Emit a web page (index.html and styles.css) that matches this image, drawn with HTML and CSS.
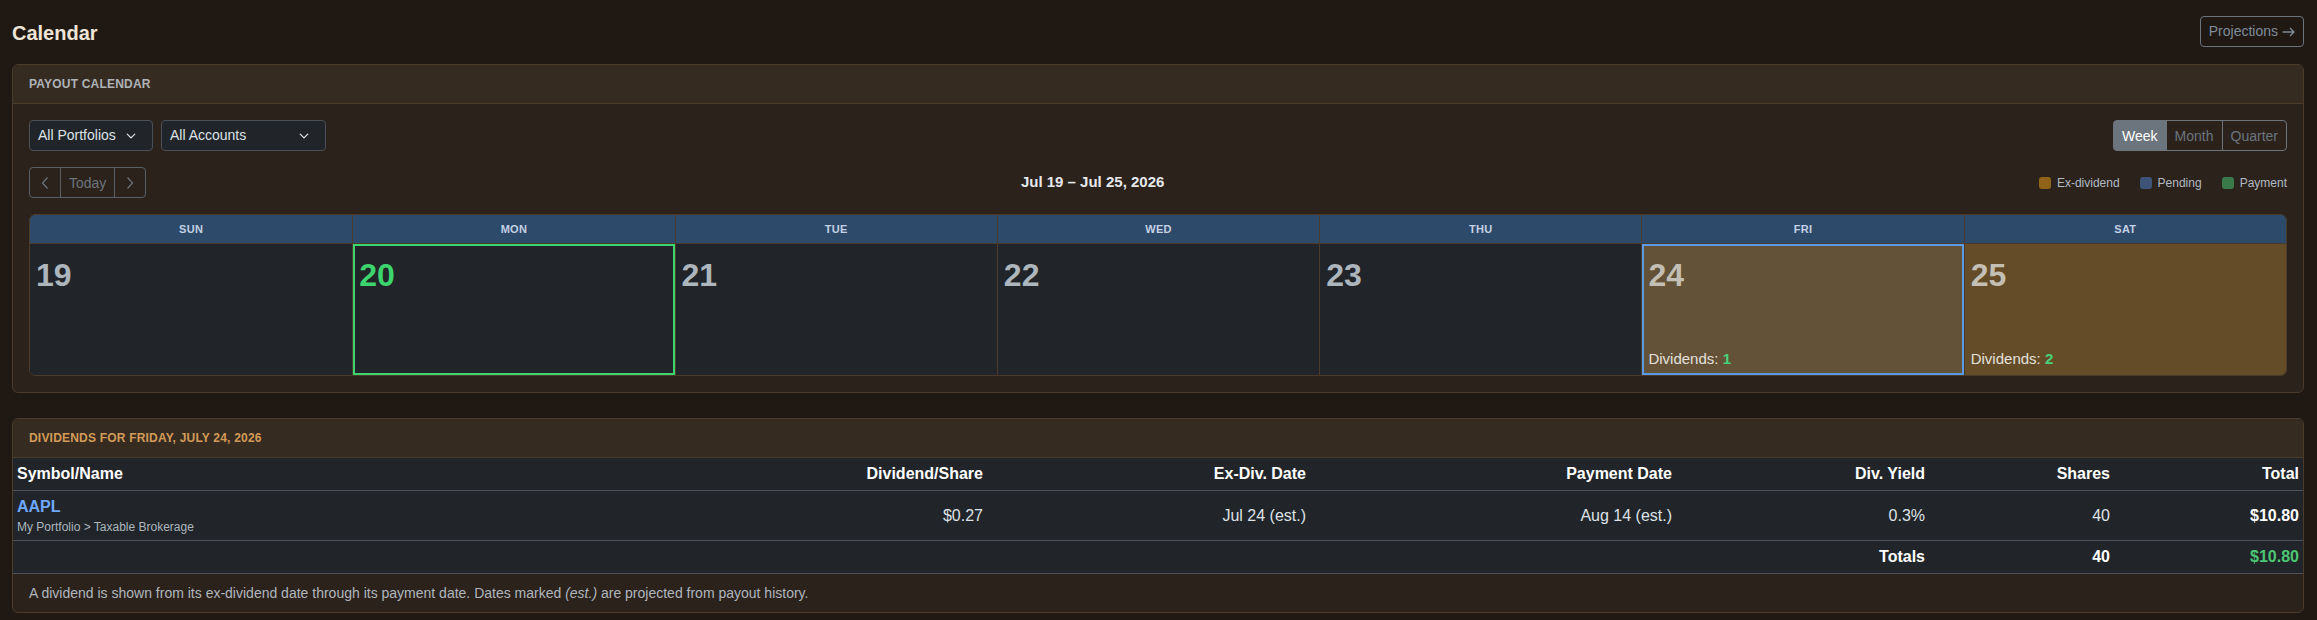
FILE: index.html
```html
<!DOCTYPE html>
<html lang="en">
<head>
<meta charset="utf-8">
<title>Calendar</title>
<link rel="stylesheet" href="styles.css">
</head>
<body>
<div class="page">
  <header class="page-head">
    <h1 class="page-title">Calendar</h1>
    <a class="btn-outline" href="#">Projections
      <svg class="arrow" viewBox="0 0 13 10" width="13" height="10"><path d="M0.5 5h11.5M8 1l4 4-4 4"/></svg>
    </a>
  </header>

  <section class="card">
    <div class="card-header">Payout Calendar</div>
    <div class="card-body">
      <div class="toolbar">
        <div class="filters">
          <div class="select select-portfolio">
            <span>All Portfolios</span>
            <svg class="caret" viewBox="0 0 16 16" width="14" height="10"><path d="M2 5l6 6 6-6"/></svg>
          </div>
          <div class="select select-account">
            <span>All Accounts</span>
            <svg class="caret" viewBox="0 0 16 16" width="14" height="10"><path d="M2 5l6 6 6-6"/></svg>
          </div>
        </div>
        <div class="seg">
          <button class="seg-btn active">Week</button>
          <button class="seg-btn">Month</button>
          <button class="seg-btn">Quarter</button>
        </div>
      </div>

      <div class="toolbar">
        <div class="seg nav">
          <button class="seg-btn icon" aria-label="Previous week">
            <svg viewBox="0 0 8 14" width="8" height="14"><path d="M6.5 1.5L1.5 7l5 5.5"/></svg>
          </button>
          <button class="seg-btn">Today</button>
          <button class="seg-btn icon" aria-label="Next week">
            <svg viewBox="0 0 8 14" width="8" height="14"><path d="M1.5 1.5l5 5.5-5 5.5"/></svg>
          </button>
        </div>
        <div class="range">Jul 19 – Jul 25, 2026</div>
        <ul class="legend">
          <li><span class="swatch ex"></span>Ex-dividend</li>
          <li><span class="swatch pending"></span>Pending</li>
          <li><span class="swatch paid"></span>Payment</li>
        </ul>
      </div>

      <div class="week">
        <div class="dow">Sun</div>
        <div class="dow">Mon</div>
        <div class="dow">Tue</div>
        <div class="dow">Wed</div>
        <div class="dow">Thu</div>
        <div class="dow">Fri</div>
        <div class="dow">Sat</div>

        <div class="day"><span class="num">19</span></div>
        <div class="day today"><span class="num">20</span></div>
        <div class="day"><span class="num">21</span></div>
        <div class="day"><span class="num">22</span></div>
        <div class="day"><span class="num">23</span></div>
        <div class="day selected">
          <span class="num">24</span>
          <span class="count">Dividends: <b>1</b></span>
        </div>
        <div class="day exdiv">
          <span class="num">25</span>
          <span class="count">Dividends: <b>2</b></span>
        </div>
      </div>
    </div>
  </section>

  <section class="card">
    <div class="card-header accent">Dividends for Friday, July 24, 2026</div>
    <table class="divs">
      <colgroup>
        <col class="c-sym"><col class="c-dps"><col class="c-ex"><col class="c-pay">
        <col class="c-yld"><col class="c-sh"><col class="c-tot">
      </colgroup>
      <thead>
        <tr>
          <th class="sym">Symbol/Name</th>
          <th>Dividend/Share</th>
          <th>Ex-Div. Date</th>
          <th>Payment Date</th>
          <th>Div. Yield</th>
          <th>Shares</th>
          <th>Total</th>
        </tr>
      </thead>
      <tbody>
        <tr>
          <td class="sym">
            <a class="ticker" href="#">AAPL</a>
            <div class="acct">My Portfolio &gt; Taxable Brokerage</div>
          </td>
          <td>$0.27</td>
          <td>Jul 24 (est.)</td>
          <td>Aug 14 (est.)</td>
          <td>0.3%</td>
          <td>40</td>
          <td class="strong">$10.80</td>
        </tr>
      </tbody>
      <tfoot>
        <tr>
          <td class="sym"></td>
          <td></td>
          <td></td>
          <td></td>
          <td class="strong">Totals</td>
          <td class="strong">40</td>
          <td class="strong gain">$10.80</td>
        </tr>
      </tfoot>
    </table>
    <div class="card-footer">A dividend is shown from its ex-dividend date through its payment date. Dates marked <em>(est.)</em> are projected from payout history.</div>
  </section>
</div>
</body>
</html>
```

FILE: styles.css
```css
* { box-sizing: border-box; }

html, body { margin: 0; }

body {
  background: #1f1813;
  color: #dee2e6;
  font-family: "Liberation Sans", Arial, sans-serif;
  font-size: 14px;
  line-height: 1.5;
}

.page { padding: 16px 13px 0 12px; }

/* page heading */
.page-head {
  display: flex;
  align-items: center;
  justify-content: space-between;
  height: 31px;
  margin-bottom: 17px;
}
.page-title {
  margin: 4px 0 0;
  font-size: 20px;
  font-weight: 700;
  line-height: 31px;
  color: #eee5d7;
}
.btn-outline {
  display: inline-flex;
  align-items: center;
  gap: 4px;
  height: 31px;
  padding: 0 8px;
  border: 1px solid #6c757d;
  border-radius: 4px;
  color: #7f8c9a;
  font-size: 14px;
  text-decoration: none;
}
.arrow path {
  fill: none;
  stroke: #7f8c9a;
  stroke-width: 1.3;
}

/* cards */
.card {
  background: #2b221c;
  border: 1px solid #4a3b2b;
  border-radius: 6px;
  overflow: hidden;
}
.card + .card { margin-top: 25px; }
.card-header {
  background: #362b21;
  border-bottom: 1px solid #4a3b2b;
  padding: 10px 16px;
  font-size: 12px;
  line-height: 18px;
  font-weight: 700;
  letter-spacing: 0.2px;
  text-transform: uppercase;
  color: #aeb3b8;
}
.card-header.accent { color: #d39b57; }
.card-body {
  display: flex;
  flex-direction: column;
  gap: 16px;
  padding: 16px;
}
.card-footer {
  padding: 9px 16px 8px;
  font-size: 14px;
  line-height: 21px;
  color: #b0b6bc;
}

/* toolbars */
.toolbar {
  display: flex;
  align-items: center;
  justify-content: space-between;
  height: 31px;
}
.filters { display: flex; gap: 8px; }
.select {
  display: flex;
  align-items: center;
  justify-content: space-between;
  height: 31px;
  padding: 0 14px 0 8px;
  background: #212529;
  border: 1px solid #495057;
  border-radius: 4px;
  color: #dee2e6;
  font-size: 14px;
}
.select-portfolio { width: 124px; }
.select-account { width: 165px; }
.caret path {
  fill: none;
  stroke: #dee2e6;
  stroke-width: 2;
  stroke-linecap: round;
  stroke-linejoin: round;
}

.seg { display: flex; }
.seg-btn {
  display: flex;
  align-items: center;
  justify-content: center;
  height: 31px;
  padding: 0 8px;
  background: transparent;
  border: 1px solid #6c757d;
  color: #6c757d;
  font-family: inherit;
  font-size: 14px;
}
.seg-btn + .seg-btn { margin-left: -1px; }
.seg-btn:first-child { border-radius: 4px 0 0 4px; }
.seg-btn:last-child { border-radius: 0 4px 4px 0; }
.seg-btn.active { background: #6c757d; color: #fff; }
.nav .seg-btn { border-color: #596067; }
.nav .seg-btn.icon { width: 32px; padding: 0; }
.nav svg path {
  fill: none;
  stroke: #6c757d;
  stroke-width: 1.2;
}
.range {
  flex: 1;
  text-align: center;
  font-size: 15px;
  font-weight: 700;
  color: #e6e9ec;
}
.legend {
  display: flex;
  gap: 20px;
  margin: 0;
  padding: 0;
  list-style: none;
  font-size: 12px;
  color: #b2bac2;
}
.legend li { display: flex; align-items: center; gap: 6px; }
.swatch { width: 12px; height: 12px; border-radius: 3px; }
.swatch.ex { background: #8f6418; }
.swatch.pending { background: #3d5478; }
.swatch.paid { background: #3a7a4a; }

/* week grid */
.week {
  display: grid;
  grid-template-columns: repeat(7, 1fr);
  border: 1px solid #4a3b2b;
  border-radius: 6px;
  overflow: hidden;
}
.dow {
  height: 29px;
  background: #2e4a6b;
  border-bottom: 1px solid #4a3b2b;
  color: #c3d1e3;
  font-size: 11px;
  font-weight: 700;
  line-height: 28px;
  letter-spacing: 0.3px;
  text-align: center;
  text-transform: uppercase;
}
.dow + .dow, .day + .day { border-left: 1px solid #4a3b2b; }
.day {
  display: flex;
  flex-direction: column;
  justify-content: space-between;
  align-items: flex-start;
  height: 131px;
  padding: 12px 8px 5px 6px;
  background: #212529;
}
.num {
  font-size: 32px;
  font-weight: 700;
  line-height: 38px;
  color: #adb5bd;
}
.count { font-size: 15px; line-height: 22px; color: #e3e1dc; }
.count b { color: #46d27a; }
.day.today { box-shadow: inset 0 0 0 2px #3dd56d; }
.day.today .num { color: #3dd56d; }
.day.selected { background: #635238; box-shadow: inset 0 0 0 2px #5b9be6; }
.day.selected .num, .day.exdiv .num { color: #c4bfb4; }
.day.exdiv { background: #654c28; }

/* dividends table */
.divs {
  width: 100%;
  border-collapse: collapse;
  table-layout: fixed;
  background: #212529;
  font-size: 16px;
  line-height: 24px;
}
.c-sym { width: 600px; }
.c-dps { width: 375px; }
.c-ex { width: 323px; }
.c-pay { width: 366px; }
.c-yld { width: 253px; }
.c-sh { width: 185px; }
.c-tot { width: 189px; }
.divs th, .divs td {
  padding: 4px 5px 4px 4px;
  text-align: right;
  vertical-align: middle;
  border-bottom: 1px solid #4d5258;
}
.divs th { color: #fff; font-weight: 700; }
.divs td { color: #dee2e6; }
.divs .sym { text-align: left; }
.ticker {
  display: block;
  color: #6ea8fe;
  font-weight: 700;
  text-decoration: none;
}
.acct { font-size: 12px; line-height: 17px; color: #adb5bd; }
.divs .strong { font-weight: 700; color: #fff; }
.divs .gain { color: #4cc774; }
```
